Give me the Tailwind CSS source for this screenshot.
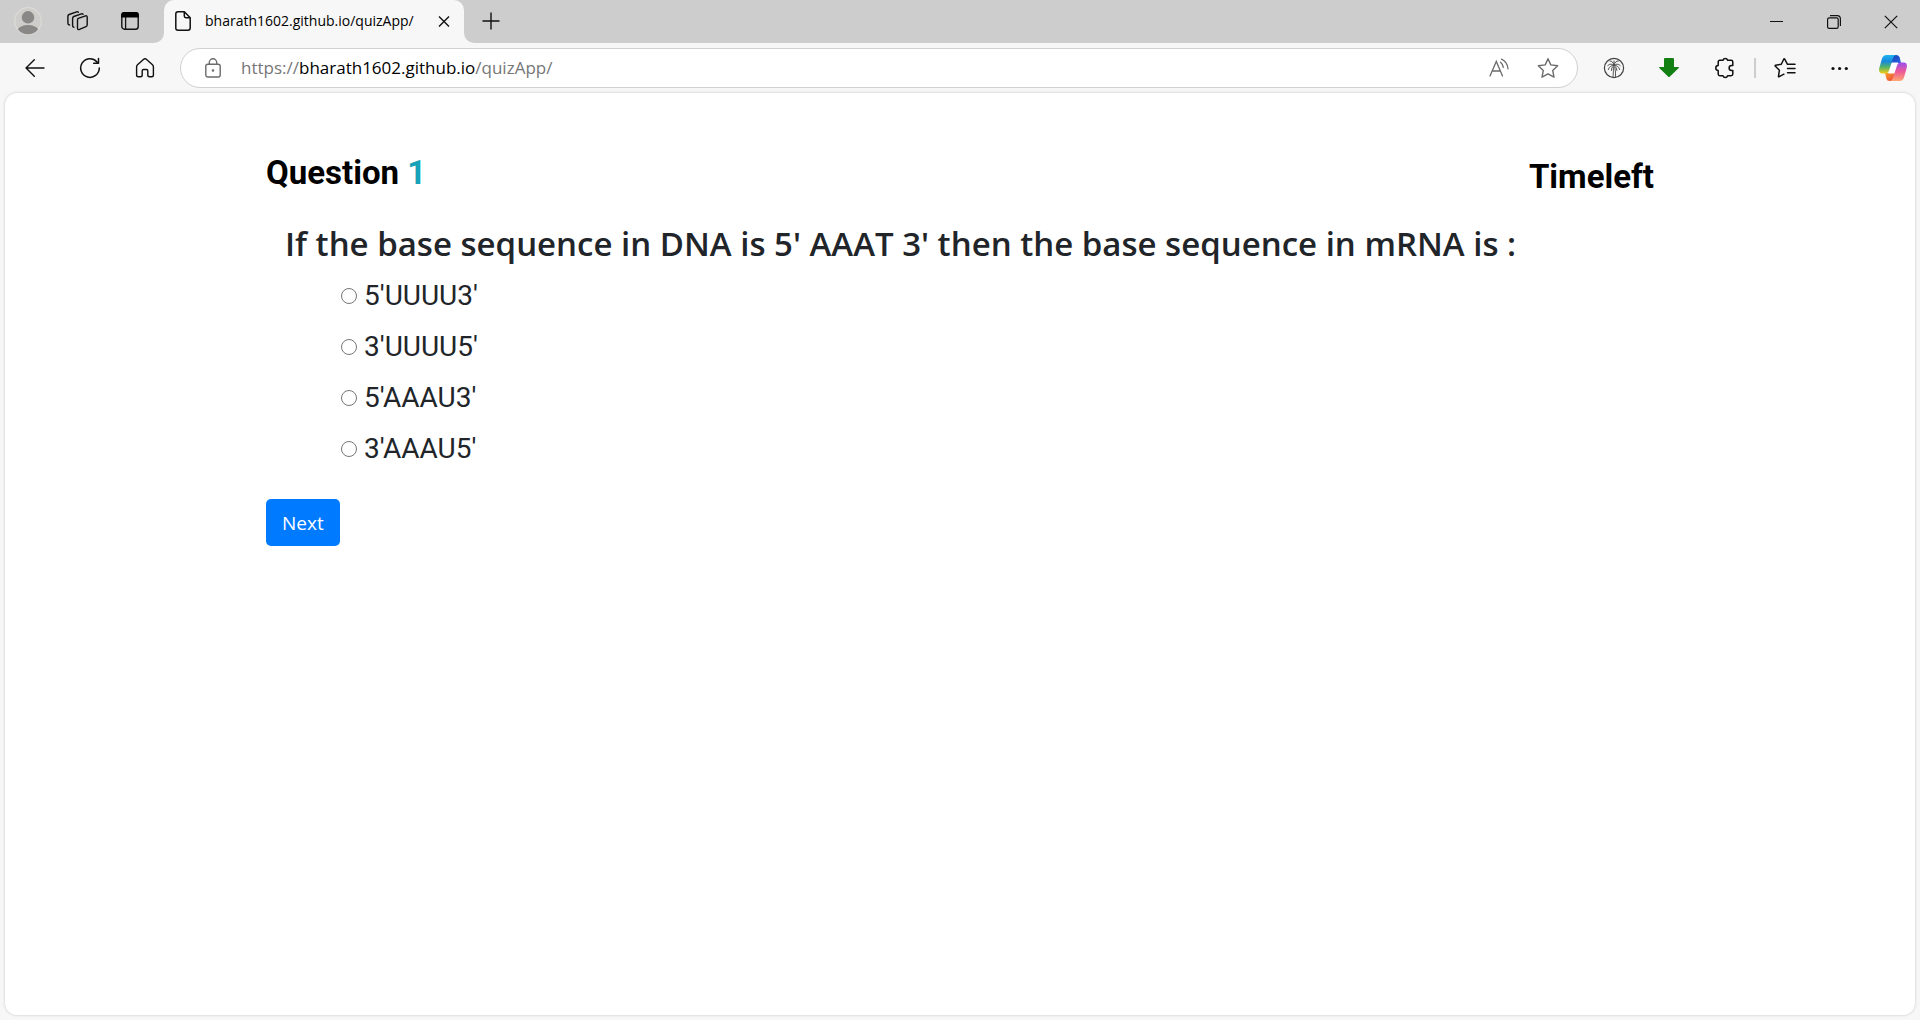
<!DOCTYPE html>
<html lang="en">
<head>
<meta charset="utf-8">
<title>bharath1602.github.io/quizApp/</title>
<script src="https://cdn.jsdelivr.net/npm/@tailwindcss/browser@4"></script>
</head>
<body class="flex h-screen flex-col bg-[#f7f7f7] font-['Open_Sans','Noto_Sans',sans-serif] text-black">

<!-- Tab strip -->
<header class="flex h-[43px] shrink-0 items-stretch bg-[#cdcdcd]">
  <div class="flex items-center pb-px pl-[2px]">
    <button class="flex w-[52px] justify-center" aria-label="Profile">
      <svg class="size-7" viewBox="0 0 28 28"><circle cx="14" cy="14" r="13.3" fill="#cfcdca" stroke="#dddbd8" stroke-width="1.2"/><circle cx="14" cy="10.3" r="6.2" fill="#8a8886"/><path d="M3.8 22.3C5.5 19.6 9 18 14 18s8.500 1.600 10.200 4.300C21.700 25.500 18 27.300 14 27.300S6.300 25.500 3.800 22.300z" fill="#8a8886"/></svg>
    </button>
    <button class="flex w-[48px] justify-center" aria-label="Workspaces">
      <svg class="size-6" viewBox="0 0 24 24" fill="none" stroke="#111" stroke-width="1.400" stroke-linejoin="round" stroke-linecap="round"><path d="M12.300 9.400 19.500 6.900q1.700-.5 1.700 1.300v7.600q0 1.300-1.200 1.800l-6.500 2.800q-2 .7-2-1.300v-8.100q0-1.200.8-1.600z"/><path d="M7.900 18.200q-1.300-.2-1.300-1.500V9.200q0-1.200 1.200-1.700l7.600-2.700q1.200-.4 1.600.5"/><path d="M3.600 16q-1.700-.2-1.700-1.700V7.200q0-1.200 1.200-1.700l7.600-2.700q1.200-.4 1.600.5"/></svg>
    </button>
    <button class="flex w-[56px] justify-center" aria-label="Tab actions">
      <svg class="size-5" viewBox="0 0 20 20"><rect x="1.800" y="1.800" width="16.400" height="16.400" rx="2.800" fill="none" stroke="#111" stroke-width="1.400"/><path d="M1.100 6.600V4q0-2.900 2.900-2.900h12q2.900 0 2.900 2.900v2.600z" fill="#000"/><path d="M5.600 6v12" stroke="#111" stroke-width="1.300"/></svg>
    </button>
  </div>
  <div class="relative ml-[6px] flex w-[300px] items-center rounded-t-[10px] bg-[#f7f7f7] pb-px pl-[11px]">
    <svg class="absolute bottom-0 -left-[10px] size-[10px]" viewBox="0 0 10 10"><path d="M10 0v10H0A10 10 0 0 0 10 0z" fill="#f7f7f7"/></svg>
    <svg class="absolute bottom-0 -right-[10px] size-[10px]" viewBox="0 0 10 10"><path d="M0 0v10h10A10 10 0 0 1 0 0z" fill="#f7f7f7"/></svg>
    <svg class="h-5 w-4 shrink-0" viewBox="0 0 16 20" fill="none" stroke="#111" stroke-width="1.500" stroke-linejoin="round"><path d="M3 .8h6.300L15.200 6.700V17q0 2.200-2.200 2.200H3Q.8 19.200.8 17V3Q.8.8 3 .8z"/><path d="M9.300.8V5q0 1.700 1.700 1.700h4.200"/></svg>
    <span class="ml-[14px] flex-1 text-[14px] leading-5 whitespace-nowrap">bharath1602.github.io/quizApp/</span>
    <button class="mr-[14px] flex size-[12px]" aria-label="Close tab"><svg class="size-3" viewBox="0 0 12 12" stroke="#111" stroke-width="1.400"><path d="M1 1.500l10 10M11 1.500l-10 10"/></svg></button>
  </div>
  <button class="ml-[18px] self-center pb-px" aria-label="New tab"><svg class="size-[18px]" viewBox="0 0 18 18" stroke="#111" stroke-width="1.400"><path d="M9 .5v17M.5 9h17"/></svg></button>
  <div class="ml-auto flex pr-[1px]">
    <button class="flex w-[57px] items-center justify-center" aria-label="Minimize"><svg class="size-[14px]" viewBox="0 0 14 14"><path d="M0 6.500h13" stroke="#111"/></svg></button>
    <button class="flex w-[57px] items-center justify-center" aria-label="Restore"><svg class="size-[14px]" viewBox="0 0 14 14" fill="none" stroke="#111" stroke-width="1.200"><rect x=".6" y="2.800" width="10.600" height="10.600" rx="1.600"/><path d="M3 .7h7.200q3.200 0 3.200 3.200V11"/></svg></button>
    <button class="flex w-[57px] items-center justify-center" aria-label="Close"><svg class="size-[14px]" viewBox="0 0 14 14" stroke="#111" stroke-width="1.200"><path d="M.8.8l12.400 12.400M13.200.8.8 13.200"/></svg></button>
  </div>
</header>

<!-- Toolbar -->
<nav class="flex h-[49px] shrink-0 items-center pl-[7px]" aria-label="Browser toolbar">
  <button class="flex w-[55px] justify-center" aria-label="Back"><svg class="size-5" viewBox="0 0 20 20" fill="none" stroke="#111" stroke-width="1.400" stroke-linecap="round" stroke-linejoin="round"><path d="M19 10H1M9.300 1.700 1 10l8.300 8.300"/></svg></button>
  <button class="flex w-[55px] justify-center" aria-label="Refresh"><svg class="size-[22px]" viewBox="0 0 22 22" fill="none" stroke="#111" stroke-width="1.500" stroke-linecap="round" stroke-linejoin="round"><path d="M20.300 11A9.300 9.300 0 1 1 17.800 4.700L19.500 6.300M19.500 1.500v4.800h-4.800"/></svg></button>
  <button class="flex w-[55px] justify-center" aria-label="Home"><svg class="size-5" viewBox="0 0 20 20" fill="none" stroke="#111" stroke-width="1.400" stroke-linejoin="round"><path d="M8.700 1.200q1.300-1 2.600 0l6.200 5.600q.9.900.9 2.200v8q0 1.800-1.800 1.800h-2q-1.800 0-1.800-1.800v-4.200q0-1.300-1.300-1.300h-3q-1.300 0-1.300 1.300V17q0 1.800-1.800 1.800h-2Q1.600 18.800 1.600 17V9q0-1.300.9-2.200z"/></svg></button>

  <div class="ml-2 flex h-10 flex-1 items-center rounded-full border border-[#d0d0d0] bg-white pr-[5px] pl-6">
    <button aria-label="Site information"><svg class="h-5 w-4" viewBox="0 0 16 20" fill="none" stroke="#6b6b6b" stroke-width="1.400"><rect x=".8" y="6.300" width="14.400" height="12.700" rx="2"/><path d="M4.300 6.300V4.500a3.700 3.700 0 0 1 7.400 0v1.800"/><circle cx="8" cy="12.500" r=".6" fill="#6b6b6b"/></svg></button>
    <div class="ml-5 flex-1 text-[17px] leading-6 text-[#767676]" role="textbox" aria-label="Address">https://<span class="text-black">bharath1602.github.io</span>/quizApp/</div>
    <button class="flex w-[49px] justify-center" aria-label="Read aloud"><svg class="size-5" viewBox="0 0 20 20" fill="none" stroke="#6b6b6b" stroke-width="1.300" stroke-linecap="round"><path d="M1 18 7.300 3.500 13.500 18M3.200 13h8.200M11.500 4.300q2.300 1.700 2.800 5M12.500 1.200q5.800 2.500 6.500 9.600"/></svg></button>
    <button class="flex w-[49px] justify-center" aria-label="Add to favorites"><svg class="size-[22px]" viewBox="0 0 22 22" fill="none" stroke="#6b6b6b" stroke-width="1.400" stroke-linejoin="round"><path d="M11 1.700l2.800 6.200 6.900.8-5 4.700 1.300 6.700-6-3.300-6 3.300 1.300-6.700-5-4.700 6.900-.8z"/></svg></button>
  </div>

  <div class="flex items-center pl-[9px]">
    <button class="flex w-[54px] justify-center" aria-label="Palm extension"><svg class="size-[22px]" viewBox="0 0 22 22" fill="none" stroke="#444" stroke-linecap="round"><circle cx="11" cy="11" r="9.600" stroke-width="1.200"/><path stroke-width=".9" d="M10 20.300q.6-6 .4-10M12.600 20.300q.2-5.500-.8-10M11 8.500Q8 5.500 4.800 8.500M11 8.500Q6.500 8 5.300 12.600M11 8.500q-1-5-4-4.500M11 8.500q1-5 4.300-4.500M11 8.500q3-3 6.200 0M11 8.500q4.500-.5 5.700 4.100M11 8.500q-3 1.500-2.700 5M11 8.500q3 1.500 3 5M11 8.500V4"/></svg></button>
    <button class="flex w-14 justify-center" aria-label="Download extension"><svg class="size-5" viewBox="0 0 20 20"><path d="M5 1q0-1 1-1h8q1 0 1 1v8h4.500q1 .2 0 1.200l-8.800 8.600q-.7.600-1.400 0L.5 10.200Q-.5 9.200.5 9H5z" fill="#138013"/></svg></button>
    <button class="flex w-14 justify-center" aria-label="Extensions"><svg class="size-[22px]" viewBox="0 0 22 22" fill="none" stroke="#111" stroke-width="1.500" stroke-linejoin="round"><path d="M9 3.300a2.400 2.400 0 0 1 4.600 0h3.500q1.700 0 1.700 1.700v3.500h-1.200a2.500 2.500 0 0 0 0 5h1.200V17q0 1.700-1.700 1.700h-3.500a2.400 2.400 0 0 1-4.600 0H5.900q-1.700 0-1.700-1.700v-3.600a2.400 2.400 0 0 1 0-4.800V5q0-1.700 1.700-1.700z"/></svg></button>
    <div class="ml-px h-5 w-[2px] bg-[#cdcdcd]"></div>
    <button class="flex w-14 justify-center pl-[2px]" aria-label="Favorites"><svg class="size-[22px]" viewBox="0 0 22 22" fill="none" stroke="#111" stroke-width="1.500" stroke-linecap="round" stroke-linejoin="round"><path d="M13.500 7.300l-2.800-5.100q-.5-.9-1 0L7.300 7.300l-5.600.9q-1 .2-.3 1l4 4.100-.9 5.900q-.1 1 .8.500l4.600-2.500M14.500 7.300H21M13.500 11.500H21M13.500 15.700H21"/></svg></button>
    <button class="flex w-14 justify-center" aria-label="Settings and more"><svg class="size-5" viewBox="0 0 20 20" fill="#111"><circle cx="3" cy="10.500" r="1.600"/><circle cx="9.600" cy="10.500" r="1.600"/><circle cx="16.300" cy="10.500" r="1.600"/></svg></button>
    <button class="flex w-[52px] justify-center pr-[2px]" aria-label="Copilot">
      <svg class="h-[26px] w-7" viewBox="0 0 28 26">
        <defs>
          <linearGradient id="cl" x1="0" y1="0" x2="0" y2="1"><stop offset="0" stop-color="#1fb4ee"/><stop offset=".35" stop-color="#1788dc"/><stop offset=".65" stop-color="#52b566"/><stop offset="1" stop-color="#f7cb14"/></linearGradient>
          <linearGradient id="cr" x1="0" y1="0" x2="0" y2="1"><stop offset="0" stop-color="#9a4df0"/><stop offset=".5" stop-color="#ee5a96"/><stop offset="1" stop-color="#ffa870"/></linearGradient>
          <linearGradient id="ct" x1="0" y1="0" x2="1" y2="1"><stop offset="0" stop-color="#1643b8"/><stop offset="1" stop-color="#2c63e0"/></linearGradient>
          <linearGradient id="cb" x1="0" y1="0" x2="1" y2="1"><stop offset="0" stop-color="#f8a325"/><stop offset="1" stop-color="#ea4040"/></linearGradient>
        </defs>
        <path d="M12 8 14 0h3.500q2.500 0 3.200 2.500L22 8z" fill="url(#ct)"/>
        <path d="M16 18 14 26h-3.500Q8 26 7.300 23.500L6 18z" fill="url(#cb)"/>
        <path d="M13 7.500h6L15.500 18.500h-6z" fill="#fff"/>
        <path d="M7.500 0h9.200q-2 .7-2.700 3.200L10 15.500q-1 3-3.800 3H3.300Q-.8 18.500.3 13L3 3.500Q4.200 0 7.500 0z" fill="url(#cl)"/>
        <path d="M20.500 26h-9.200q2-.7 2.700-3.200L18 10.500q1-3 3.800-3h2.900q4.100 0 3 5.500L25 22.500Q23.800 26 20.500 26z" fill="url(#cr)"/>
      </svg>
    </button>
  </div>
</nav>

<!-- Web page -->
<main class="mx-[5px] mt-px mb-[5px] flex-1 rounded-xl bg-white px-6 pt-[59px] shadow-[0_0_3px_rgba(0,0,0,0.2)]">
  <div class="mx-auto w-full max-w-[1388px]">
    <div class="flex items-start justify-between font-['Roboto',sans-serif] text-[33px] leading-[42px] font-bold">
      <h1>Question <span class="text-[#17a2b8]">1</span></h1>
      <h2 class="mt-1">Timeleft</h2>
    </div>
    <form class="text-[#212529]">
      <fieldset class="mt-6">
        <legend class="ml-[19px] text-[33px] leading-[44px] font-semibold">If the base sequence in DNA is 5' AAAT 3' then the base sequence in mRNA is :</legend>
        <div class="mt-1 ml-[75px] flex flex-col font-['Roboto',sans-serif] text-[28px] leading-[51px]">
          <label class="flex items-center gap-[7px]"><input type="radio" name="answer" class="size-4">5'UUUU3'</label>
          <label class="flex items-center gap-[7px]"><input type="radio" name="answer" class="size-4">3'UUUU5'</label>
          <label class="flex items-center gap-[7px]"><input type="radio" name="answer" class="size-4">5'AAAU3'</label>
          <label class="flex items-center gap-[7px]"><input type="radio" name="answer" class="size-4">3'AAAU5'</label>
        </div>
      </fieldset>
      <button type="button" class="mt-[25px] h-[47px] rounded-[5px] bg-[#007bff] px-4 text-[19px] leading-[30px] text-white">Next</button>
    </form>
  </div>
</main>
</body>
</html>
